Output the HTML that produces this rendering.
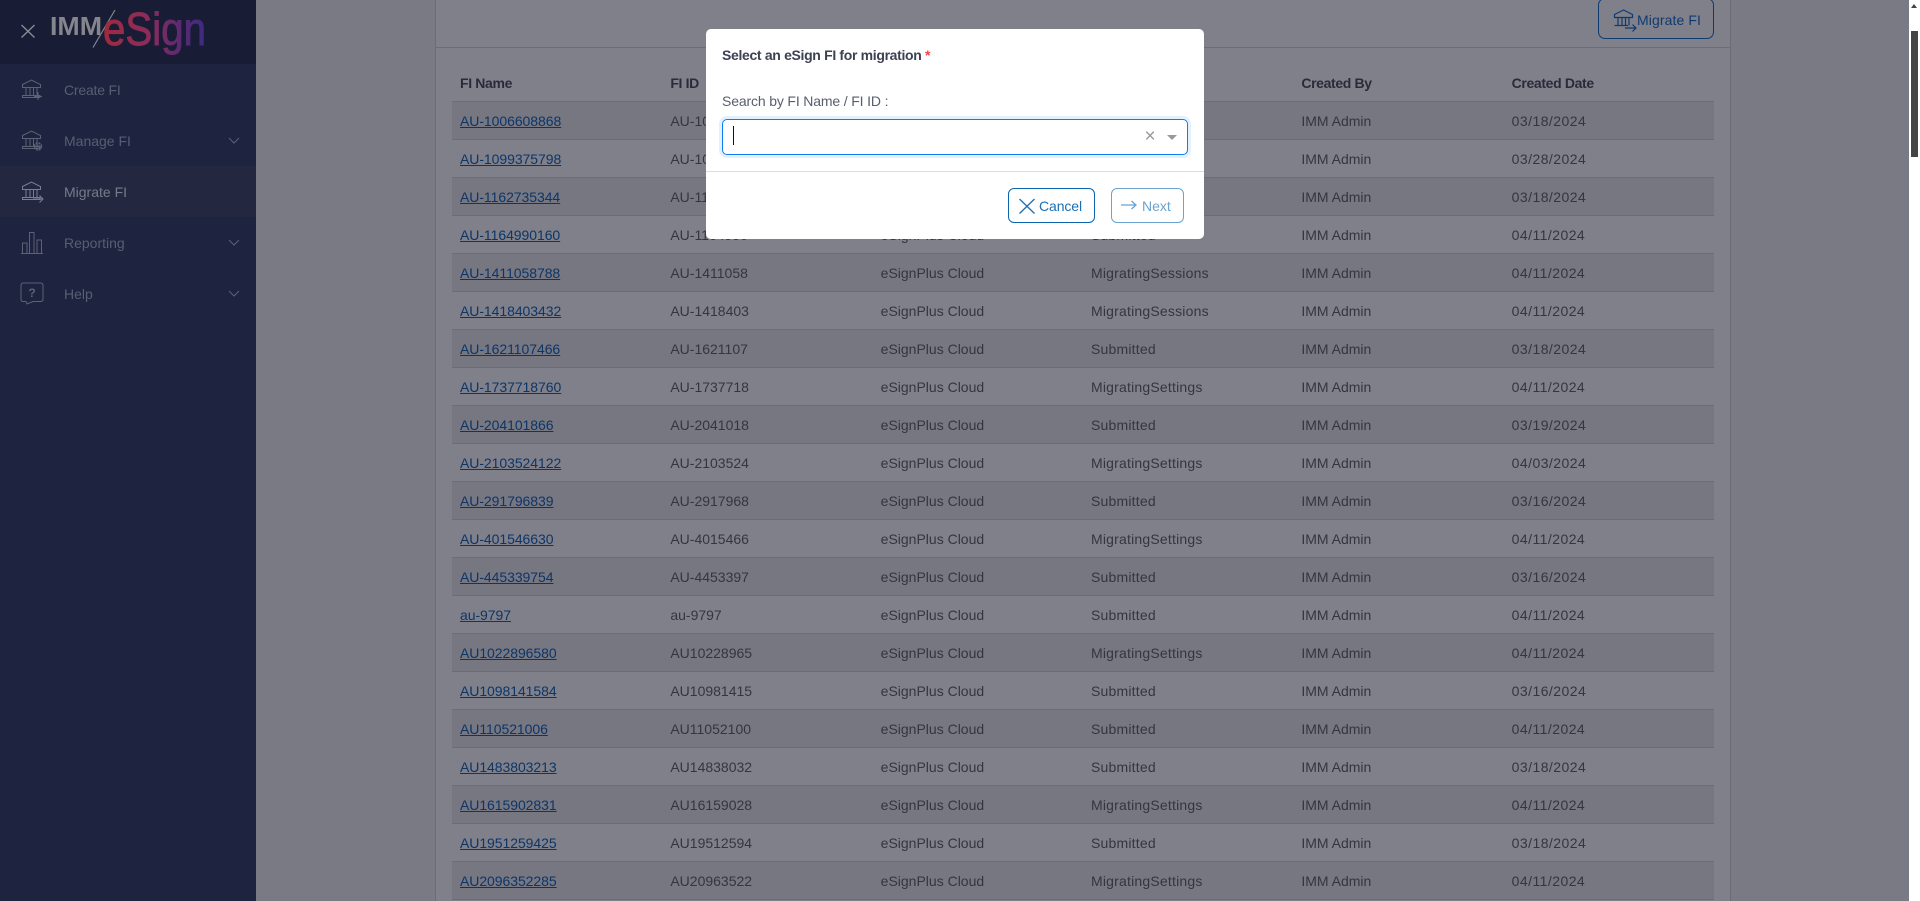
<!DOCTYPE html>
<html lang="en">
<head>
<meta charset="utf-8">
<title>IMM eSign - Migrate FI</title>
<style>
*{box-sizing:border-box}
html,body{margin:0;padding:0;width:1920px;height:901px;overflow:hidden;background:#7a7a84;font-family:"Liberation Sans",sans-serif;font-size:14px;color:#35353f}
.abs{position:absolute}
#side{left:0;top:0;width:256px;height:901px;background:#1e2340}
#side .hd{position:absolute;left:0;top:0;width:256px;height:64px;background:#181d35}
#side .act{position:absolute;left:0;top:166px;width:256px;height:51px;background:#232840}
#side .t{position:absolute;left:64px;height:20px;line-height:20px;color:#585e72;font-size:14px}
#card{left:435px;top:-2px;height:903px;width:1296px;background:#80808a;border-left:1px solid #6c6c78;border-right:1px solid #6c6c78}
#bar{left:436px;top:47px;width:1294px;height:1px;background:#6c6c78}
#tb{left:452px;top:60px;width:1262px;border-collapse:collapse;table-layout:fixed}
#tb th{height:41px;padding:5px 0 0 8px;text-align:left;font-weight:bold;color:#2a2a3a;font-size:14px;border-bottom:1px solid #6c6c78;letter-spacing:-.35px}
#tb td{height:38px;padding:2px 0 0 8px;border-bottom:1px solid #6c6c78;white-space:nowrap;overflow:hidden}
#tb tr:nth-child(odd) td{background:#777781}
#tb a{color:#0c3568;text-decoration:underline;letter-spacing:-.06px}
#tb td:nth-child(4){letter-spacing:.2px}
#tb td:nth-child(6){letter-spacing:.45px}
#mig{left:1598px;top:-2px;width:116px;height:41px;border:1px solid #0f3a70;border-radius:7px}
#migt{left:1637px;top:10px;height:20px;line-height:20px;color:#0f3a70;font-size:14px;letter-spacing:.1px;width:70px;white-space:nowrap}
#sb{left:1909px;top:0;width:11px;height:901px;background:#fff}
#th{left:1911px;top:31px;width:7px;height:126px;background:#444}
#modal{left:706px;top:29px;width:498px;height:210px;background:#fff;border-radius:5px}
#mt{left:722px;top:45px;height:20px;line-height:20px;font-weight:bold;font-size:14px;color:#3c4252;white-space:nowrap;letter-spacing:-.33px}
#mt span{color:#ef4444}
#ml{left:722px;top:91px;height:20px;line-height:20px;font-size:14px;color:#585e6c;white-space:nowrap;letter-spacing:-.15px}
#inp{left:722px;top:119px;width:466px;height:36px;border:1px solid #0d7ef0;border-radius:5px;box-shadow:0 0 0 3px #e3f0fd;background:#fff}
#cur{left:733px;top:126px;width:1px;height:19px;background:#111}
#clr{left:1143px;top:127px;width:14px;height:20px;line-height:20px;text-align:center;color:#999;font-size:19px}
#car{left:1167px;top:135px;width:0;height:0;border-left:5px solid transparent;border-right:5px solid transparent;border-top:5px solid #999}
#dv{left:706px;top:171px;width:498px;height:1px;background:#ddd}
.btn{height:35px;border-radius:6px;background:#fff}
#can{left:1008px;top:188px;width:87px;border:1px solid #0b66b0}
#nxt{left:1111px;top:188px;width:73px;border:1px solid #6aa3cf}
.bt{height:20px;line-height:20px;top:196px;font-size:14px;white-space:nowrap}
</style>
</head>
<body>
<div id="side" class="abs">
  <div class="hd"></div>
  <div class="act"></div>
  <svg class="abs" style="left:0;top:0" width="256" height="320" viewBox="0 0 256 320" fill="none">
    <defs>
      <linearGradient id="lg" x1="104" x2="205" y1="0" y2="0" gradientUnits="userSpaceOnUse">
        <stop offset="0" stop-color="#a02a3e"/><stop offset=".45" stop-color="#8a2c5c"/><stop offset=".75" stop-color="#5c2a72"/><stop offset="1" stop-color="#3e2a80"/>
      </linearGradient>
      <g id="bank" stroke-width="1">
        <path d="M22.500 84.500 31.500 80 40.500 84.500V87.500H22.500Z"/>
        <path d="M26 88V95.500M30 88V95.500M33.500 88V95.500M37 88V95.500"/>
        <path d="M22.500 95.500H40V97.500H22.500Z"/>
      </g>
    </defs>
    <path d="M21.500 25 34.500 37.500M34.500 25 21.500 37.500" stroke="#8b8d96" stroke-width="1.300"/>
    <text x="50" y="35" font-family="Liberation Sans" font-weight="bold" font-size="26" fill="#85858d" textLength="52" lengthAdjust="spacingAndGlyphs">IMM</text>
    <path d="M115 10 93 47.500" stroke="#85858d" stroke-width="1.200"/>
    <text x="103" y="45" font-family="Liberation Sans" font-size="46" fill="url(#lg)" stroke="url(#lg)" stroke-width=".9" textLength="103" lengthAdjust="spacingAndGlyphs">eSign</text>
    <g stroke="#5c6275"><use href="#bank"/><path d="M38 92V100M34 96.500H42" stroke-width="1"/></g>
    <g stroke="#5c6275"><use href="#bank" y="51"/><circle cx="38" cy="146.500" r="3.500" stroke-width="1.500" stroke-dasharray="2 .8"/><circle cx="38" cy="146.500" r="1.500" stroke-width=".7"/></g>
    <g stroke="#7a7f8f"><use href="#bank" y="102"/><path d="M33 199H43M39.500 195.500 43 199 39.500 202.500" stroke-width="1"/></g>
    <g stroke="#5c6275" stroke-width="1">
      <path d="M21 253.500H43M22.500 253V243H27V253M29.500 253V232.500H34V253M37 253V240H41.500V253"/>
      <path d="M23 283H40.500Q43 283 43 285.500V299Q43 301.500 40.500 301.500H33L27 304 26 301.500H23Q21 301.500 21 299V285.500Q21 283 23 283Z"/>
    </g>
    <text x="32" y="297" text-anchor="middle" font-family="Liberation Sans" font-weight="bold" font-size="12" fill="#5c6275">?</text>
    <g stroke="#5c6275" stroke-width="1">
      <path d="M229 138 234 143 239 138M229 240 234 245 239 240M229 291 234 296 239 291"/>
    </g>
  </svg>
  <div class="t" style="top:80px;letter-spacing:-.2px">Create FI</div>
  <div class="t" style="top:131px">Manage FI</div>
  <div class="t" style="top:182px;color:#767a8a">Migrate FI</div>
  <div class="t" style="top:233px">Reporting</div>
  <div class="t" style="top:284px">Help</div>
</div>

<div id="card" class="abs"></div>
<div id="bar" class="abs"></div>
<div id="mig" class="abs"></div>
<svg class="abs" style="left:1612px;top:7px" width="26" height="26" viewBox="20 77 26 26" fill="none" stroke="#0f3a70">
  <path d="M22.500 84.500 31.500 80 40.500 84.500V87.500H22.500Z" stroke-width="1.200"/>
  <path d="M26 88V95.500M30 88V95.500M33.500 88V95.500M37 88V95.500" stroke-width="1.200"/>
  <path d="M22.500 95.500H36" stroke-width="1.200"/>
  <path d="M33 98H44M40.500 94.500 44 98 40.500 101.500" stroke-width="1.200"/>
</svg>
<div id="migt" class="abs">Migrate FI</div>

<table id="tb" class="abs">
<thead><tr><th>FI Name</th><th>FI ID</th><th>Product</th><th>Status</th><th>Created By</th><th>Created Date</th></tr></thead>
<tbody>
<tr><td><a>AU-1006608868</a></td><td>AU-1006608</td><td>eSignPlus Cloud</td><td>Submitted</td><td>IMM Admin</td><td>03/18/2024</td></tr>
<tr><td><a>AU-1099375798</a></td><td>AU-1099375</td><td>eSignPlus Cloud</td><td>Submitted</td><td>IMM Admin</td><td>03/28/2024</td></tr>
<tr><td><a>AU-1162735344</a></td><td>AU-1162735</td><td>eSignPlus Cloud</td><td>Submitted</td><td>IMM Admin</td><td>03/18/2024</td></tr>
<tr><td><a>AU-1164990160</a></td><td>AU-1164990</td><td>eSignPlus Cloud</td><td>Submitted</td><td>IMM Admin</td><td>04/11/2024</td></tr>
<tr><td><a>AU-1411058788</a></td><td>AU-1411058</td><td>eSignPlus Cloud</td><td>MigratingSessions</td><td>IMM Admin</td><td>04/11/2024</td></tr>
<tr><td><a>AU-1418403432</a></td><td>AU-1418403</td><td>eSignPlus Cloud</td><td>MigratingSessions</td><td>IMM Admin</td><td>04/11/2024</td></tr>
<tr><td><a>AU-1621107466</a></td><td>AU-1621107</td><td>eSignPlus Cloud</td><td>Submitted</td><td>IMM Admin</td><td>03/18/2024</td></tr>
<tr><td><a>AU-1737718760</a></td><td>AU-1737718</td><td>eSignPlus Cloud</td><td>MigratingSettings</td><td>IMM Admin</td><td>04/11/2024</td></tr>
<tr><td><a>AU-204101866</a></td><td>AU-2041018</td><td>eSignPlus Cloud</td><td>Submitted</td><td>IMM Admin</td><td>03/19/2024</td></tr>
<tr><td><a>AU-2103524122</a></td><td>AU-2103524</td><td>eSignPlus Cloud</td><td>MigratingSettings</td><td>IMM Admin</td><td>04/03/2024</td></tr>
<tr><td><a>AU-291796839</a></td><td>AU-2917968</td><td>eSignPlus Cloud</td><td>Submitted</td><td>IMM Admin</td><td>03/16/2024</td></tr>
<tr><td><a>AU-401546630</a></td><td>AU-4015466</td><td>eSignPlus Cloud</td><td>MigratingSettings</td><td>IMM Admin</td><td>04/11/2024</td></tr>
<tr><td><a>AU-445339754</a></td><td>AU-4453397</td><td>eSignPlus Cloud</td><td>Submitted</td><td>IMM Admin</td><td>03/16/2024</td></tr>
<tr><td><a>au-9797</a></td><td>au-9797</td><td>eSignPlus Cloud</td><td>Submitted</td><td>IMM Admin</td><td>04/11/2024</td></tr>
<tr><td><a>AU1022896580</a></td><td>AU10228965</td><td>eSignPlus Cloud</td><td>MigratingSettings</td><td>IMM Admin</td><td>04/11/2024</td></tr>
<tr><td><a>AU1098141584</a></td><td>AU10981415</td><td>eSignPlus Cloud</td><td>Submitted</td><td>IMM Admin</td><td>03/16/2024</td></tr>
<tr><td><a>AU110521006</a></td><td>AU11052100</td><td>eSignPlus Cloud</td><td>Submitted</td><td>IMM Admin</td><td>04/11/2024</td></tr>
<tr><td><a>AU1483803213</a></td><td>AU14838032</td><td>eSignPlus Cloud</td><td>Submitted</td><td>IMM Admin</td><td>03/18/2024</td></tr>
<tr><td><a>AU1615902831</a></td><td>AU16159028</td><td>eSignPlus Cloud</td><td>MigratingSettings</td><td>IMM Admin</td><td>04/11/2024</td></tr>
<tr><td><a>AU1951259425</a></td><td>AU19512594</td><td>eSignPlus Cloud</td><td>Submitted</td><td>IMM Admin</td><td>03/18/2024</td></tr>
<tr><td><a>AU2096352285</a></td><td>AU20963522</td><td>eSignPlus Cloud</td><td>MigratingSettings</td><td>IMM Admin</td><td>04/11/2024</td></tr>
</tbody>
</table>

<div id="sb" class="abs"></div>
<div class="abs" style="left:1911px;top:4px;width:0;height:0;border-left:3.500px solid transparent;border-right:3.500px solid transparent;border-bottom:4px solid #444"></div>
<div id="th" class="abs"></div>

<div id="modal" class="abs"></div>
<div id="mt" class="abs">Select an eSign FI for migration <span>*</span></div>
<div id="ml" class="abs">Search by FI Name / FI ID :</div>
<div id="inp" class="abs"></div>
<div id="cur" class="abs"></div>
<div id="clr" class="abs">×</div>
<div id="car" class="abs"></div>
<div id="dv" class="abs"></div>
<div id="can" class="abs btn"></div>
<div id="nxt" class="abs btn"></div>
<svg class="abs" style="left:1015px;top:194px" width="170" height="24" viewBox="0 0 170 24" fill="none">
  <path d="M4.500 5 19.500 19.500M19.500 5 4.500 19.500" stroke="#1c6fb3" stroke-width="1.300"/>
  <path d="M106 11H121M116.500 7 121 11 116.500 15" stroke="#6aa3cf" stroke-width="1.300"/>
</svg>
<div class="abs bt" style="left:1039px;color:#1c6fb3;letter-spacing:-.1px">Cancel</div>
<div class="abs bt" style="left:1142px;color:#6aa3cf">Next</div>
</body>
</html>
